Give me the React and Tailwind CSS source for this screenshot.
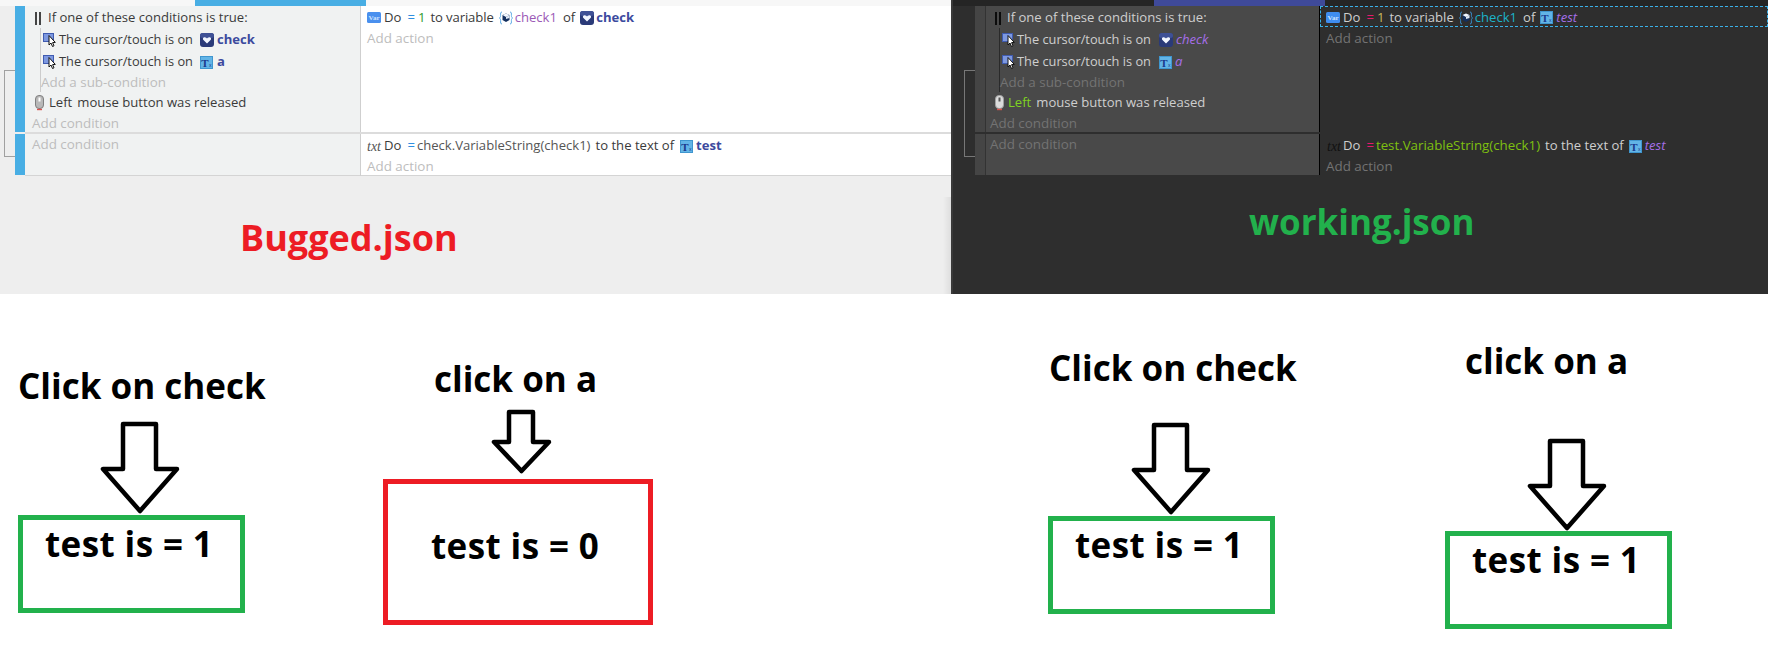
import React from "react";

const VarIcon = ({ dark }) => (
  <svg width="14" height="12" viewBox="0 0 14 12" className="shrink-0">
    <rect x="0" y="0" width="14" height="11" rx="1.5" fill={dark ? "#3f8df0" : "#4a90ee"} />
    <text x="7" y="8" textAnchor="middle" fontSize="7" fontFamily="Liberation Serif, serif" fontWeight="700" fill="#cfe4ff">Var</text>
  </svg>
);
const CursorIcon = () => (
  <svg width="13" height="15" viewBox="0 0 13 15" className="shrink-0">
    <rect x="0.5" y="0.5" width="10" height="8" fill="#7d98e0" stroke="#3f5bb0" />
    <path d="M6 2.5 L6 12 L8 10 L9.5 13.5 L11 12.8 L9.6 9.6 L12.3 9.4 Z" fill="#fff" stroke="#111" strokeWidth="1" strokeLinejoin="round" />
  </svg>
);
const CheckIcon = () => (
  <svg width="14" height="14" viewBox="0 0 14 14" className="shrink-0">
    <rect x="0" y="0" width="14" height="14" rx="3" fill="#2a3a78" />
    <rect x="0" y="0" width="14" height="5" rx="2.5" fill="#3f5196" />
    <path d="M7 10.5 L3.2 6.8 C2.4 5.6 3.4 4 4.8 4.3 C5.8 4.4 6.5 5 7 5.6 C7.5 5 8.2 4.4 9.2 4.3 C10.6 4 11.6 5.6 10.8 6.8 Z" fill="#f2f6ff" />
  </svg>
);
const TextIcon = () => (
  <svg width="13" height="13" viewBox="0 0 13 13" className="shrink-0">
    <rect x="0" y="0" width="13" height="13" fill="#62b4e6" />
    <rect x="0.5" y="0.5" width="12" height="12" fill="none" stroke="#3f96cf" />
    <text x="5" y="10.5" textAnchor="middle" fontSize="11" fontFamily="Liberation Serif, serif" fontWeight="700" fill="#1a3a8c">T</text>
    <text x="10.2" y="10.5" textAnchor="middle" fontSize="5" fontFamily="Liberation Sans, sans-serif" fill="#1a3a8c">x</text>
  </svg>
);
const BraceIcon = ({ dark }) => (
  <svg width="14" height="14" viewBox="0 0 14 14" className="shrink-0">
    <path d="M3 1 C1.4 1 1.6 2.5 1.6 4.5 C1.6 6 1.2 6.6 0.5 7 C1.2 7.4 1.6 8 1.6 9.5 C1.6 11.5 1.4 13 3 13" fill="none" stroke={dark ? "#3a8fd0" : "#5aa9e6"} />
    <path d="M11 1 C12.6 1 12.4 2.5 12.4 4.5 C12.4 6 12.8 6.6 13.5 7 C12.8 7.4 12.4 8 12.4 9.5 C12.4 11.5 12.6 13 11 13" fill="none" stroke={dark ? "#3a8fd0" : "#5aa9e6"} />
    <path d="M3.5 4 L7 2.6 L10.5 4 L10.5 9 L7 11 L3.5 9 Z" fill="#14305f" />
    <path d="M3.5 4 L7 2.6 L10.5 4 L7 6 Z" fill="#f4f8ff" />
    <path d="M7 6 L10.5 4 L10.5 7 L7 8 Z" fill="#dfe9f7" />
  </svg>
);
const MouseIcon = ({ dark }) => (
  <svg width="11" height="16" viewBox="0 0 11 16" className="shrink-0">
    <rect x="1.5" y="0.5" width="8" height="13" rx="3.5" fill={dark ? "#dcdcdc" : "#b8b8b8"} stroke={dark ? "#a0a0a0" : "#808080"} />
    <rect x="4.5" y="2.5" width="2" height="4" fill={dark ? "#555555" : "#ffffff"} />
    <path d="M3 14.5 L8 14.5" stroke="#d9534f" strokeWidth="1.4" />
  </svg>
);
const OrIcon = ({ dark }) => (
  <span className="flex shrink-0 gap-[2px] h-[13px]">
    <span className={dark ? "w-[2px] bg-[#0c0c0c]" : "w-[2px] bg-[#444444]"} />
    <span className={dark ? "w-[2px] bg-[#0c0c0c]" : "w-[2px] bg-[#444444]"} />
  </span>
);
const TxtIcon = ({ dark }) => (
  <span className={dark ? "font-['Liberation_Serif'] italic text-[14px] text-[#111111] w-[14px] shrink-0" : "font-['Liberation_Serif'] italic text-[14px] text-[#555555] w-[14px] shrink-0"}>txt</span>
);

const Row = ({ className, children }) => (
  <div className={"flex items-center whitespace-nowrap pt-[2px] " + className}>{children}</div>
);

const LightPanel = () => (
  <div className="flex flex-col w-[951px] h-[294px] shrink-0 bg-[#eeeeee]">
    <div className="h-[6px] bg-[#f7f7f7]">
      <div className="ml-[195px] w-[171px] h-full bg-[#48aee4]" />
    </div>
    <div className="flex text-[#3a3a3a]">
      <div className="w-[15px] shrink-0">
        <div className="mt-[64px] ml-[4px] h-[87px] border-l border-y border-[#a0a0a0]" />
      </div>
      <div className="flex-1 flex flex-col">
        <div className="flex h-[126px]">
          <div className="w-[10px] bg-[#48aee4]" />
          <div className="w-[335px] bg-[#f0f2f2] flex flex-col">
            <Row className="h-[22px] pl-[10px]"><OrIcon /><span className="ml-[7px]">If one of these conditions is true:</span></Row>
            <div className="ml-[15px] border-l border-[#cccccc]">
              <Row className="h-[22px] pl-[2px]"><CursorIcon /><span className="ml-[3px] text-[12.8px]">The cursor/touch is on</span><span className="ml-[7px]"><CheckIcon /></span><span className="ml-[3px] font-bold text-[#3c4a9e]">check</span></Row>
              <Row className="h-[22px] pl-[2px]"><CursorIcon /><span className="ml-[3px] text-[12.8px]">The cursor/touch is on</span><span className="ml-[7px]"><TextIcon /></span><span className="ml-[4px] font-bold text-[#3c4a9e]">a</span></Row>
              <Row className="h-[20px] pb-[2px] text-[#bdbdbd] text-[13.4px]">Add a sub-condition</Row>
            </div>
            <Row className="h-[20px] pl-[9px]"><MouseIcon /><span className="ml-[4px]">Left</span><span className="ml-[5px]">mouse button was released</span></Row>
            <Row className="h-[20px] pl-[7px] text-[#bdbdbd] text-[13.4px]">Add condition</Row>
          </div>
          <div className="w-px bg-[#cfcfcf]" />
          <div className="flex-1 bg-white flex flex-col">
            <Row className="h-[22px] pl-[6px]"><VarIcon /><span className="ml-[3px]">Do</span><span className="ml-[6px] text-[#2f8fe0]">=</span><span className="ml-[3px] text-[#2e9a2e]">1</span><span className="ml-[5px] tracking-[-0.1px]">to variable</span><span className="ml-[5px]"><BraceIcon /></span><span className="ml-[2px] text-[#9b59b6]">check1</span><span className="ml-[6px]">of</span><span className="ml-[5px]"><CheckIcon /></span><span className="ml-[2px] font-bold text-[#3c4a9e]">check</span></Row>
            <Row className="h-[20px] pb-[2px] pl-[6px] text-[#bdbdbd] text-[13.4px]">Add action</Row>
          </div>
        </div>
        <div className="h-[2px] ml-[10px] bg-[#dcdcdc]" />
        <div className="flex h-[42px]">
          <div className="w-[10px] bg-[#48aee4] mb-px" />
          <div className="w-[335px] bg-[#f0f2f2] border-b border-[#d4d4d4]">
            <Row className="h-[20px] pb-[2px] pl-[7px] text-[#bdbdbd] text-[13.4px]">Add condition</Row>
          </div>
          <div className="w-px bg-[#cfcfcf]" />
          <div className="flex-1 bg-white flex flex-col border-b border-[#d4d4d4]">
            <Row className="h-[22px] pl-[6px]"><TxtIcon /><span className="ml-[3px]">Do</span><span className="ml-[6px] text-[#2f8fe0]">=</span><span className="ml-[2px] text-[#555555]">check.VariableString(check1)</span><span className="ml-[5px]">to the text of</span><span className="ml-[6px]"><TextIcon /></span><span className="ml-[3px] font-bold text-[#3c4a9e]">test</span></Row>
            <Row className="h-[20px] pb-[2px] pl-[6px] text-[#bdbdbd] text-[13.4px]">Add action</Row>
          </div>
        </div>
      </div>
    </div>
    <div className="flex-1 flex">
      <div className="flex-1 pl-[240px] pt-[30px] h-[94px] leading-[64px] text-[36px] font-bold text-[#ed1c24] whitespace-nowrap">Bugged.json</div>
      <div className="w-[8px] h-[97px] mt-auto bg-gradient-to-r from-[#eeeeee] to-[#dedede]" />
    </div>
  </div>
);

const DarkPanel = () => (
  <div className="flex flex-col flex-1 h-[294px] bg-[#2e2e2e] border-l-2 border-[#3a3a3a]">
    <div className="h-[6px] bg-[#252525]">
      <div className="ml-[201px] w-[171px] h-full bg-[#3f4a9a]" />
    </div>
    <div className="flex text-[#cfcfcf]">
      <div className="w-[22px] shrink-0">
        <div className="mt-[64px] ml-[11px] h-[87px] border-l border-y border-[#777777]" />
      </div>
      <div className="flex-1 flex flex-col">
        <div className="flex h-[126px]">
          <div className="w-[10px] bg-[#454545]" />
          <div className="w-px bg-[#333333]" />
          <div className="w-[333px] bg-[#494949] flex flex-col">
            <Row className="h-[22px] pl-[9px]"><OrIcon dark /><span className="ml-[6px]">If one of these conditions is true:</span></Row>
            <div className="ml-[13px] border-l border-[#2a2a2a]">
              <Row className="h-[22px] pl-[2px]"><CursorIcon /><span className="ml-[2px] text-[12.8px]">The cursor/touch is on</span><span className="ml-[8px]"><CheckIcon /></span><span className="ml-[3px] italic text-[#a56ee8]">check</span></Row>
              <Row className="h-[22px] pl-[2px]"><CursorIcon /><span className="ml-[2px] text-[12.8px]">The cursor/touch is on</span><span className="ml-[8px]"><TextIcon /></span><span className="ml-[3px] italic text-[#a56ee8]">a</span></Row>
              <Row className="h-[20px] pb-[2px] text-[#737373] text-[13.4px]">Add a sub-condition</Row>
            </div>
            <Row className="h-[20px] pl-[8px]"><MouseIcon dark /><span className="ml-[3px] text-[#7ed321]">Left</span><span className="ml-[5px]">mouse button was released</span></Row>
            <Row className="h-[20px] pl-[4px] text-[#737373] text-[13.4px]">Add condition</Row>
          </div>
          <div className="w-px bg-black" />
          <div className="flex-1 flex flex-col">
            <Row className="h-[21px] pl-[5px] border border-dashed border-[#3ab0e8]"><VarIcon dark /><span className="ml-[3px]">Do</span><span className="ml-[6px] text-[#e6196a]">=</span><span className="ml-[3px] text-[#c9b95c]">1</span><span className="ml-[5px]">to variable</span><span className="ml-[5px]"><BraceIcon dark /></span><span className="ml-[2px] text-[#1cb3c8]">check1</span><span className="ml-[6px]">of</span><span className="ml-[5px]"><TextIcon /></span><span className="ml-[3px] italic text-[#a56ee8]">test</span></Row>
            <Row className="h-[21px] pl-[6px] text-[#737373] text-[13.4px]">Add action</Row>
          </div>
        </div>
        <div className="h-[2px]" />
        <div className="flex h-[41px]">
          <div className="w-[10px] bg-[#454545]" />
          <div className="w-px bg-[#333333]" />
          <div className="w-[333px] bg-[#494949]">
            <Row className="h-[20px] pb-[2px] pl-[4px] text-[#737373] text-[13.4px]">Add condition</Row>
          </div>
          <div className="w-px bg-black" />
          <div className="flex-1 flex flex-col">
            <Row className="h-[22px] pl-[7px]"><TxtIcon dark /><span className="ml-[2px]">Do</span><span className="ml-[6px] text-[#e6196a]">=</span><span className="ml-[2px] text-[13.3px] text-[#7ec010]">test.VariableString(check1)</span><span className="ml-[5px]">to the text of</span><span className="ml-[5px]"><TextIcon /></span><span className="ml-[3px] italic text-[#a56ee8]">test</span></Row>
            <Row className="h-[20px] pb-[2px] pl-[6px] text-[#737373] text-[13.4px]">Add action</Row>
          </div>
        </div>
      </div>
    </div>
    <div className="ml-[296px] mt-[15px] h-[64px] leading-[64px] text-[35px] font-bold text-[#22b14c] whitespace-nowrap">working.json</div>
  </div>
);

const BigArrow = () => (
  <svg width="74" height="90" viewBox="0 0 74 90" className="block overflow-visible">
    <polygon points="20,2 53,2 53,47 74,47 37,89 0,47 20,47" fill="none" stroke="#000" strokeWidth="4.5" strokeLinejoin="round" />
  </svg>
);
const SmallArrow = () => (
  <svg width="55" height="62" viewBox="0 0 55 62" className="block overflow-visible">
    <polygon points="15,2 39,2 39,32 55,32 27.5,61 0,32 15,32" fill="none" stroke="#000" strokeWidth="4.5" strokeLinejoin="round" />
  </svg>
);

const Big = ({ className, children }) => (
  <div className={"h-[48px] leading-[48px] text-[35px] font-bold text-black whitespace-nowrap " + className}>{children}</div>
);

export default function App() {
  return (
    <div className="w-[1768px] h-[665px] overflow-hidden bg-white font-['Open_Sans',sans-serif] text-[13.1px]">
      <div className="flex">
        <LightPanel />
        <DarkPanel />
      </div>
      <div className="flex">
        <div className="w-[383px] shrink-0 pl-[18px]">
          <Big className="mt-[68px]">Click on check</Big>
          <div className="mt-[12px] ml-[85px]"><BigArrow /></div>
          <div className="mt-[3px] w-[227px] h-[98px] border-[5px] border-[#22b14c] pl-[22px]"><Big className="tracking-[0.4px]">test is = 1</Big></div>
        </div>
        <div className="w-[665px] shrink-0">
          <Big className="mt-[61px] ml-[51px]">click on a</Big>
          <div className="mt-[7px] ml-[111px]"><SmallArrow /></div>
          <div className="mt-[7px] w-[270px] h-[146px] border-[5px] border-[#ed1c24] pl-[43px] pt-[38px]"><Big className="tracking-[0.4px]">test is = 0</Big></div>
        </div>
        <div className="w-[397px] shrink-0">
          <Big className="mt-[50px] ml-[1px]">Click on check</Big>
          <div className="mt-[31px] ml-[86px]"><BigArrow /></div>
          <div className="mt-[3px] w-[227px] h-[98px] border-[5px] border-[#22b14c] pl-[22px]"><Big className="tracking-[0.4px]">test is = 1</Big></div>
        </div>
        <div className="flex-1">
          <Big className="mt-[43px] ml-[20px]">click on a</Big>
          <div className="mt-[54px] ml-[85px]"><BigArrow /></div>
          <div className="mt-[2px] w-[227px] h-[98px] border-[5px] border-[#22b14c] pl-[22px]"><Big className="tracking-[0.4px]">test is = 1</Big></div>
        </div>
      </div>
    </div>
  );
}
